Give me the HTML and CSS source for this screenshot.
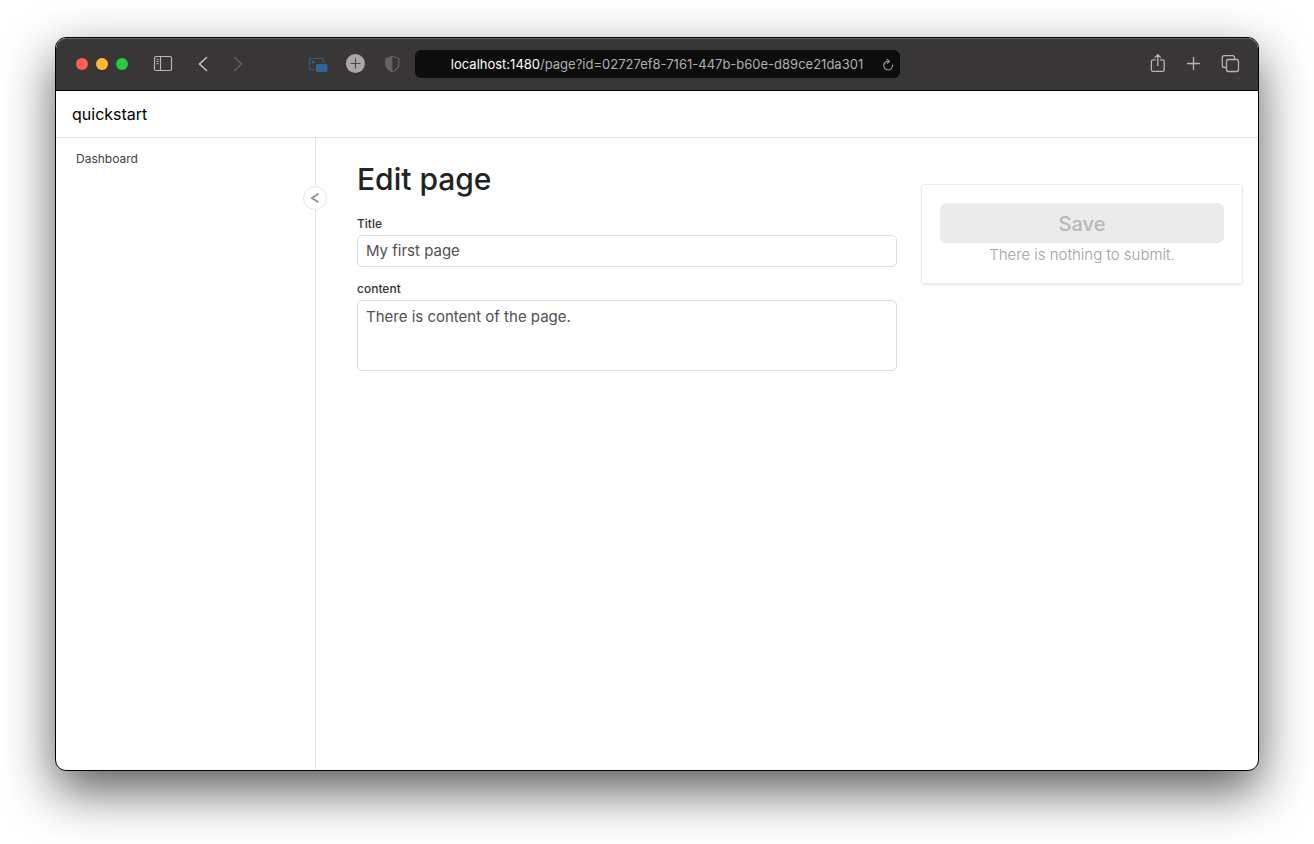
FILE: index.html
```html
<!DOCTYPE html>
<html lang="en">
<head>
<meta charset="utf-8">
<meta name="viewport" content="width=device-width, initial-scale=1">
<title>Edit page</title>
<link rel="stylesheet" href="styles.css">
</head>
<body>
<div class="window">
  <div class="toolbar">
    <div class="toolbar-left">
      <div class="lights">
        <button class="light light-close" type="button" aria-label="Close"></button>
        <button class="light light-min" type="button" aria-label="Minimize"></button>
        <button class="light light-max" type="button" aria-label="Zoom"></button>
      </div>
      <button class="tool" type="button" aria-label="Sidebar">
        <svg width="20" height="20" viewBox="0 0 20 20" fill="none" stroke="#b5b3b4" stroke-width="1.2"><rect x="1.500" y="2.500" width="17" height="14" rx="1.500"/><path d="M7.500 2.500v14"/><path d="M3.400 5.300h2.200M3.400 7.500h2.200M3.400 9.700h2.200" stroke-width="1"/></svg>
      </button>
      <div class="history">
        <button class="tool" type="button" aria-label="Back">
          <svg width="20" height="20" viewBox="0 0 20 20" fill="none" stroke="#c4c2c3" stroke-width="1.6" stroke-linecap="round" stroke-linejoin="round"><path d="M13.500 3.500 6.500 10l7 6.500"/></svg>
        </button>
        <button class="tool" type="button" aria-label="Forward" disabled>
          <svg width="20" height="20" viewBox="0 0 20 20" fill="none" stroke="#5e5c5d" stroke-width="1.6" stroke-linecap="round" stroke-linejoin="round"><path d="M6.500 3.500l7 6.500-7 6.500"/></svg>
        </button>
      </div>
      <div class="extensions">
        <button class="tool" type="button" aria-label="Picture in picture">
          <svg width="20" height="20" viewBox="0 0 20 20"><path d="M7.500 16H3.200A1.700 1.700 0 0 1 1.500 14.300V6.200A1.700 1.700 0 0 1 3.200 4.500h10.600a1.700 1.700 0 0 1 1.700 1.700V9" fill="none" stroke="#2f5d86" stroke-width="1.200"/><circle cx="5" cy="8" r="1.500" fill="#2f6596"/><rect x="8" y="10" width="11.500" height="8" rx="1.500" fill="#2f6596"/></svg>
        </button>
        <button class="tool" type="button" aria-label="Add">
          <svg width="20" height="20" viewBox="0 0 20 20"><circle cx="10.400" cy="9.500" r="9.500" fill="#a9a7a8"/><path d="M10.500 4.500v10M5.500 9.500h10" stroke="#4a4849" stroke-width="1.200"/></svg>
        </button>
        <button class="tool" type="button" aria-label="Privacy report">
          <svg width="20" height="20" viewBox="0 0 20 20"><path d="M10.300 2.300l6.500 2.200v6c0 3.400-2.800 5.700-6.500 7.300-3.700-1.600-6.500-3.900-6.500-7.300v-6z" fill="none" stroke="#646263" stroke-width="1.200" stroke-linejoin="round"/><path d="M10.300 2.300v15.500c-3.700-1.600-6.500-3.900-6.500-7.300v-6z" fill="#646263"/></svg>
        </button>
      </div>
    </div>
    <div class="address">
      <button class="url" type="button"><span class="host">localhost:1480</span>/page?id=02727ef8-7161-447b-b60e-d89ce21da301</button>
      <button class="reload" type="button" aria-label="Reload">
        <svg width="12" height="14" viewBox="0 0 12 14" fill="none" stroke="#a0a0a0" stroke-width="1.100" stroke-linecap="round" stroke-linejoin="round"><path d="M10.500 8.100A4.400 4.400 0 1 1 6.800 4.300"/><path d="M5.200 2.300 7.300 4.300 5.400 6.400"/></svg>
      </button>
    </div>
    <div class="toolbar-right">
      <button class="tool" type="button" aria-label="Share">
        <svg width="20" height="20" viewBox="0 0 20 20" fill="none" stroke="#b5b3b4" stroke-width="1.300" stroke-linecap="round" stroke-linejoin="round"><path d="M7.300 5.800H5A1.600 1.600 0 0 0 3.400 7.400v8.400A1.600 1.600 0 0 0 5 17.400h9.600a1.600 1.600 0 0 0 1.600-1.600V7.400a1.600 1.600 0 0 0-1.600-1.600h-2.300"/><path d="M9.800 11.500V.9M7.100 3.400 9.800.7l2.700 2.700"/></svg>
      </button>
      <button class="tool" type="button" aria-label="New tab">
        <svg width="20" height="20" viewBox="0 0 20 20" fill="none" stroke="#b5b3b4" stroke-width="1.300" stroke-linecap="round"><path d="M9.500 3.500v12M3.500 9.500h12"/></svg>
      </button>
      <button class="tool" type="button" aria-label="Tab overview">
        <svg width="20" height="20" viewBox="0 0 20 20" fill="none" stroke="#b5b3b4" stroke-width="1.300" stroke-linejoin="round"><rect x="6.500" y="5.500" width="12" height="12" rx="2"/><path d="M6.500 13.500H4.300a2 2 0 0 1-2-2V3.600a2 2 0 0 1 2-2h8.200a2 2 0 0 1 2 2v1.900"/></svg>
      </button>
    </div>
  </div>
  <header class="header"><a class="brand" href="#">quickstart</a></header>
  <div class="layout">
    <nav class="sidebar">
      <a class="nav-link" href="#">Dashboard</a>
      <button class="collapse" type="button" aria-label="Collapse sidebar">
        <svg width="10" height="10" viewBox="0 0 10 10" fill="none" stroke="#8f8e97" stroke-width="1.800"><path d="M8.500 .8 1.800 5l6.700 4.200"/></svg>
      </button>
    </nav>
    <main class="main">
      <form class="form">
        <h1 class="title">Edit page</h1>
        <div class="field">
          <label class="label" for="page-title">Title</label>
          <input class="control" id="page-title" type="text" value="My first page">
        </div>
        <div class="field">
          <label class="label" for="page-content">content</label>
          <textarea class="control control-area" id="page-content">There is content of the page.</textarea>
        </div>
      </form>
      <aside class="panel">
        <button class="save" type="button" disabled>Save</button>
        <p class="note">There is nothing to submit.</p>
      </aside>
    </main>
  </div>
</div>
</body>
</html>
```
FILE: styles.css
```css
* {
  box-sizing: border-box;
}

body {
  margin: 0;
  min-height: 100vh;
  display: flex;
  padding: 37px 55px 73px;
  background: #fff;
  font-family: Inter, "Liberation Sans", sans-serif;
  color: #222;
}

button {
  padding: 0;
  border: 0;
  background: none;
  font-family: inherit;
}

.window {
  flex: 1;
  min-width: 0;
  display: flex;
  flex-direction: column;
  overflow: hidden;
  border: 1px solid #000;
  border-radius: 11px;
  background: #fff;
  box-shadow: 0 20px 50px rgba(0, 0, 0, 0.64);
}

.toolbar {
  display: grid;
  grid-template-columns: 1fr minmax(0, 485px) 1fr;
  align-items: center;
  height: 53px;
  border-bottom: 1px solid #000;
  border-radius: 10px 10px 0 0;
  background: #393637;
  box-shadow: inset 0 1px 0 #656364;
}

.toolbar-left {
  display: flex;
  align-items: center;
  padding: 0 13px 0 20px;
}

.lights {
  display: flex;
  gap: 8px;
  margin-right: 25px;
}

.light {
  width: 12px;
  height: 12px;
  border-radius: 50%;
}

.light-close {
  background: #ff5f57;
}

.light-min {
  background: #febc2e;
}

.light-max {
  background: #28c840;
}

.tool {
  width: 20px;
  height: 20px;
}

.tool svg,
.reload svg,
.collapse svg {
  display: block;
}

.history {
  display: flex;
  gap: 15px;
  margin-left: 20px;
}

.extensions {
  display: flex;
  gap: 17px;
  margin-left: auto;
}

.address {
  display: grid;
  grid-template-columns: 1fr auto 1fr;
  align-items: center;
  height: 28px;
  padding: 0 6px;
  border-radius: 6px;
  background: #0d0d0d;
}

.url {
  grid-column: 2;
  font-size: 13px;
  line-height: 20px;
  color: #b0b0b0;
  white-space: nowrap;
}

.host {
  color: #fff;
}

.reload {
  justify-self: end;
}

.toolbar-right {
  display: flex;
  justify-content: flex-end;
  gap: 16px;
  padding-right: 18px;
}

.header {
  padding: 11px 16px;
  border-bottom: 1px solid #e3e3e5;
  line-height: 24px;
}

.brand {
  font-size: 16px;
  color: #000;
  text-decoration: none;
}

.layout {
  flex: 1;
  display: flex;
}

.sidebar {
  position: relative;
  width: 260px;
  flex: none;
  padding: 11px 20px;
  border-right: 1px solid #e3e3e8;
}

.nav-link {
  font-size: 12px;
  line-height: 20px;
  display: block;
  color: #404040;
  text-decoration: none;
}

.collapse {
  position: absolute;
  top: 48px;
  right: -12px;
  display: grid;
  place-items: center;
  width: 24px;
  height: 24px;
  border: 1px solid #e3e3e8;
  border-radius: 50%;
  background: #fff;
}

.main {
  flex: 1;
  display: grid;
  grid-template-columns: minmax(0, 1fr) 322px;
  align-items: start;
  gap: 24px;
  padding: 22px 15px 22px 41px;
}

.title {
  margin: 0 0 16px;
  font-size: 30px;
  font-weight: 500;
  line-height: 38px;
}

.field {
  margin-bottom: 12px;
}

.label {
  display: block;
  margin-bottom: 2px;
  font-size: 12px;
  font-weight: 500;
  line-height: 19px;
  color: #333;
}

.control {
  display: block;
  width: 100%;
  height: 32px;
  padding: 4px 8px 6px;
  border: 1px solid #dcdcdc;
  border-radius: 5px;
  background: #fff;
  font-family: inherit;
  font-size: 15px;
  line-height: 20px;
  color: #505050;
}

.control-area {
  height: 71px;
  padding: 6px 8px;
  resize: none;
}

.panel {
  margin-top: 24px;
  padding: 18px 18px 16px;
  border: 1px solid #ebebeb;
  border-radius: 3px;
  box-shadow: 0 1px 2px rgba(0, 0, 0, 0.1);
  text-align: center;
}

.save {
  display: block;
  width: 100%;
  height: 40px;
  padding-top: 2px;
  border-radius: 6px;
  background: #ebebeb;
  font-size: 20px;
  font-weight: 500;
  color: #b9b9b9;
}

.note {
  margin: 0;
  font-size: 15px;
  font-weight: 300;
  line-height: 24px;
  color: #a0a0a0;
}
```
